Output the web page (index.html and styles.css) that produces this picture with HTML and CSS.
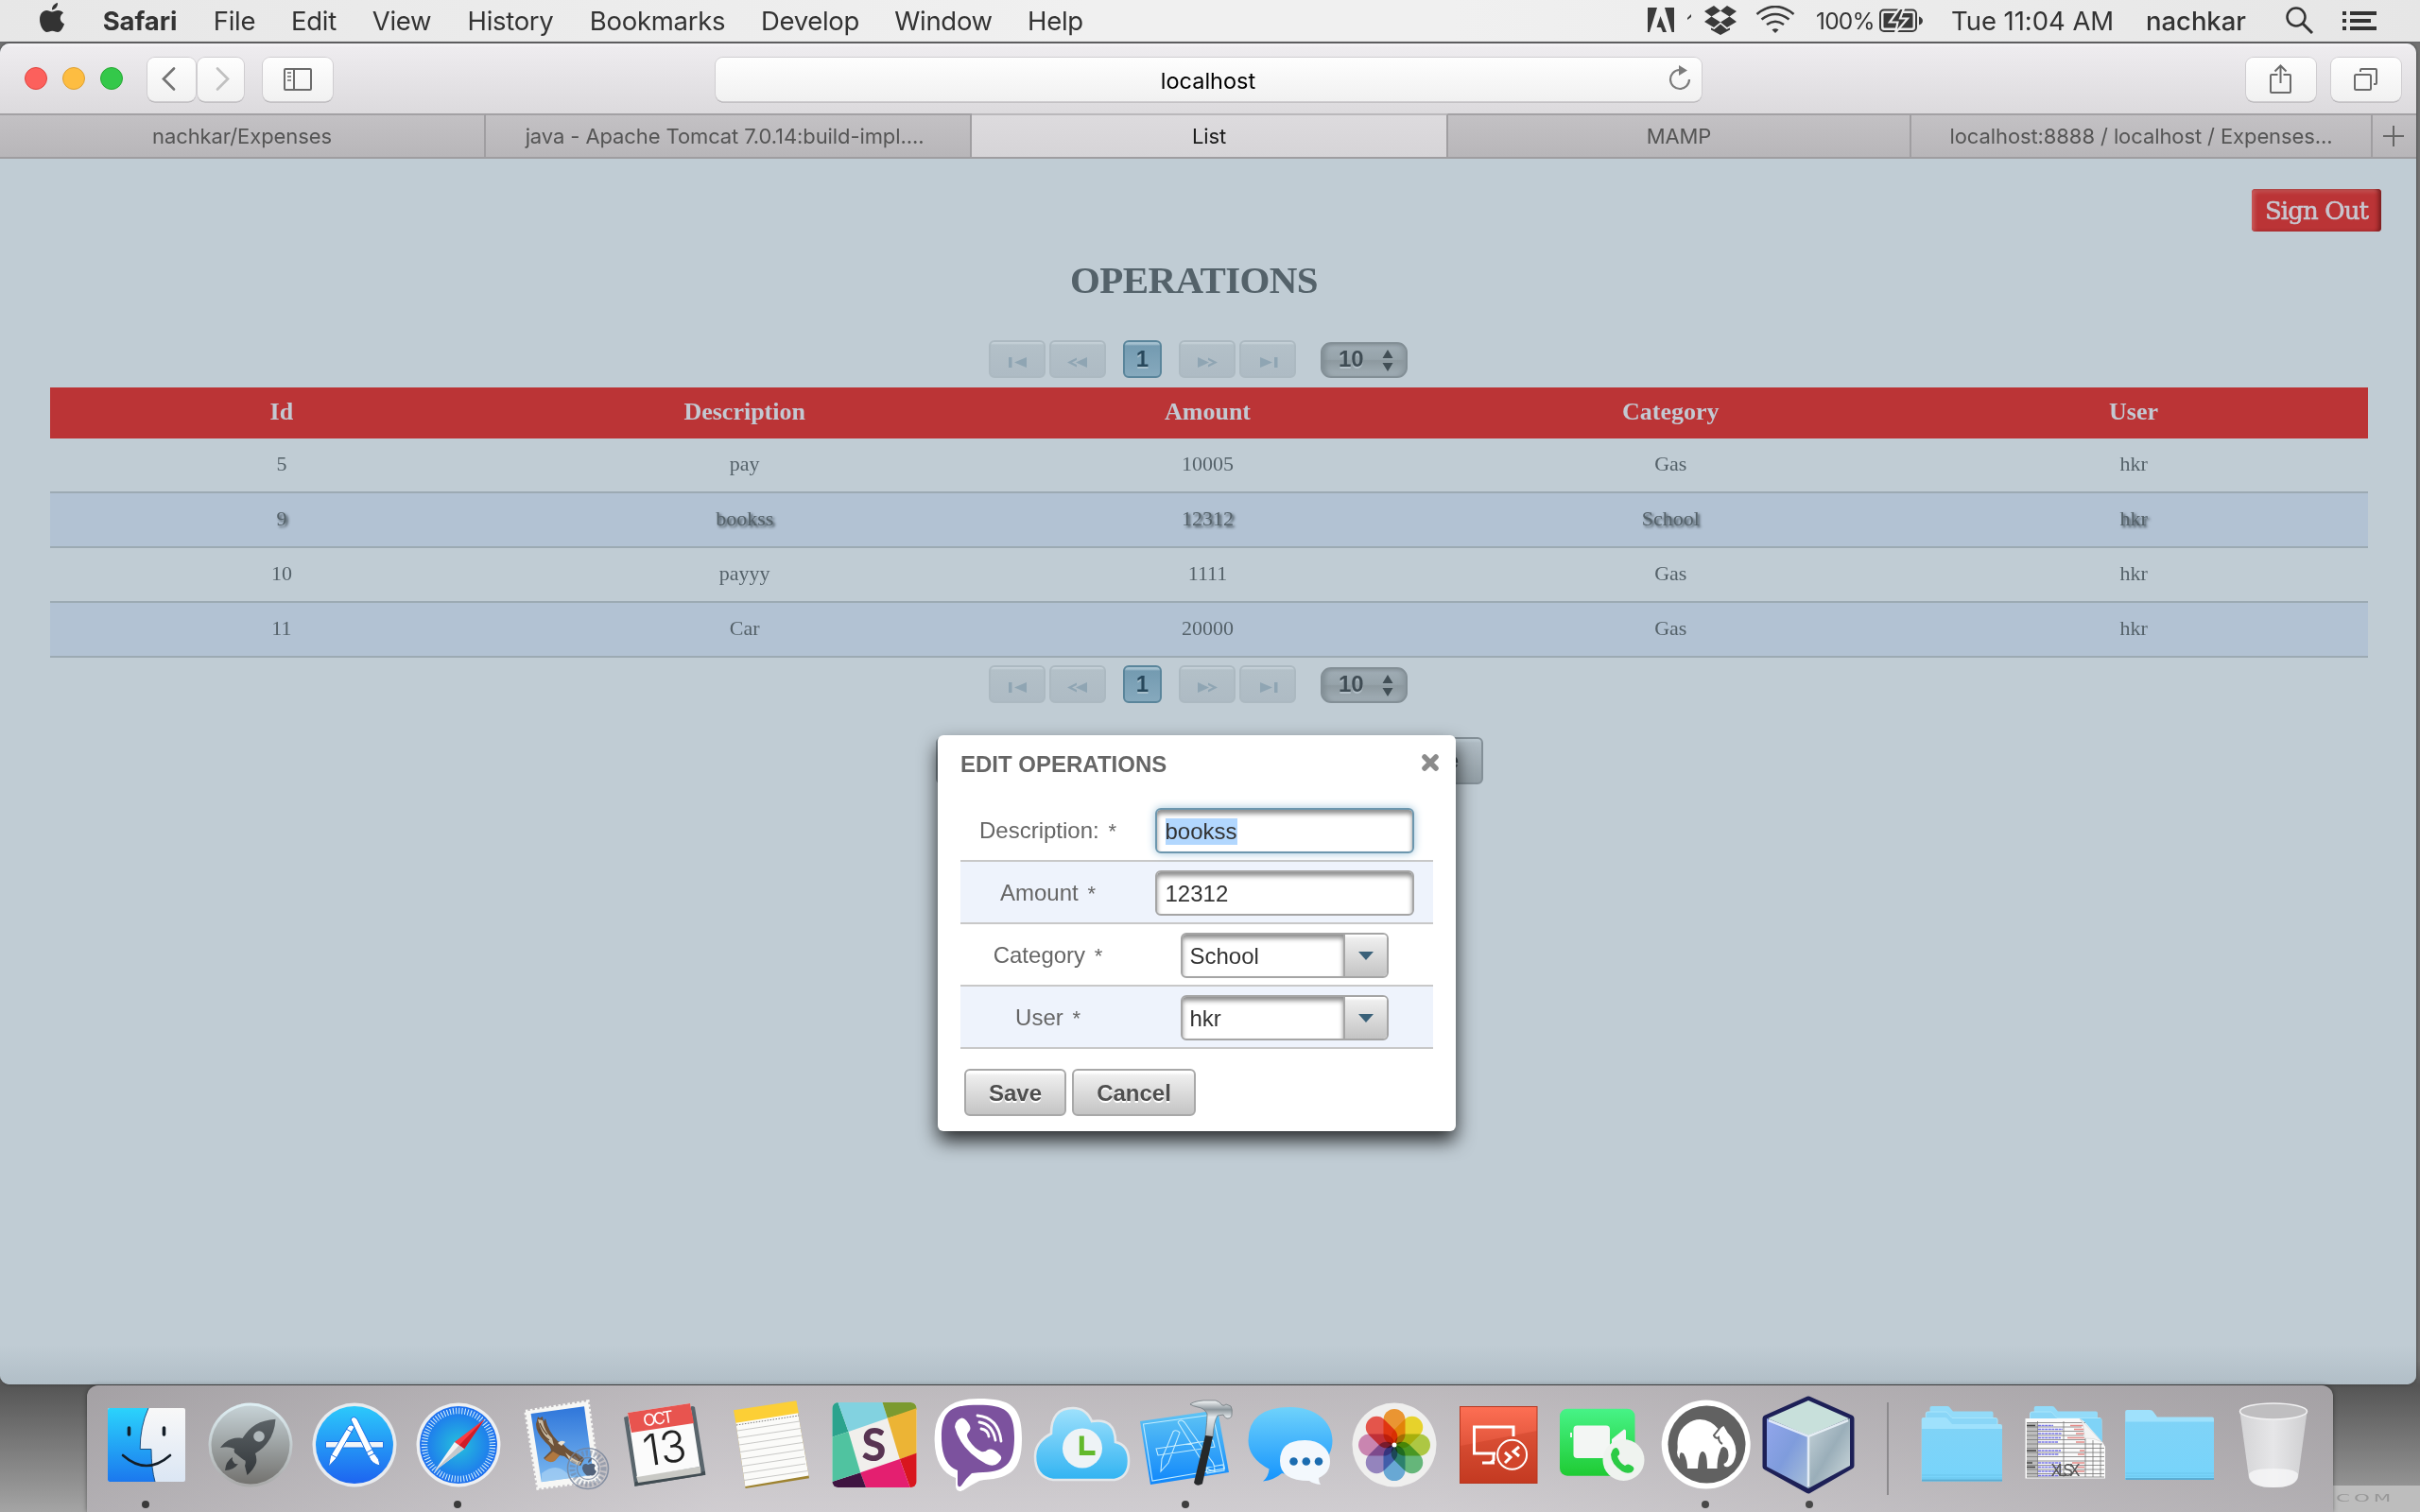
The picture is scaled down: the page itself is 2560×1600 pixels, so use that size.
FILE: index.html
```html
<!DOCTYPE html>
<html lang="en">
<head>
<meta charset="utf-8">
<title>List</title>
<link rel="stylesheet" href="styles.css">
</head>
<body>
<div class="desktop">
  <header class="menubar">
    <svg class="apple" width="26" height="32" viewBox="0 0 26 32"><path d="M13 9.500c2-0 3.800-1.600 6.500-1.600 2.300 0 4.300 1 5.500 2.800-4.800 3-4 9.700 1 11.500-1 3.500-3.800 8.800-7 8.800-2 0-3-1.300-5.700-1.300S9.500 31 7.700 31C4 31 0 24 0 17.500 0 11.500 3.600 8 7.200 8c2.400 0 4.200 1.500 5.800 1.500zM13 7.500C12.700 3.800 15.700.600 19 0c.400 3.900-2.800 7.400-6 7.500z"/></svg>
    <nav class="menus">
      <b style="width:80px">Safari</b><span style="width:44px">File</span><span style="width:48px">Edit</span><span style="width:62px">View</span><span style="width:92px">History</span><span style="width:143px">Bookmarks</span><span style="width:104px">Develop</span><span style="width:102px">Window</span><span style="width:59px">Help</span>
    </nav>
    <div class="status">
      <svg class="adobe" width="48" height="28" viewBox="0 0 48 28"><path d="M0 1h10L2 27H0zM18 1h10v26h-2.500zM13.500 10l6.500 17h-4l-2-5H9.500z"/><path d="M42 12l4-4v3l-4 3z"/></svg>
      <svg class="dropbox" width="34" height="32" viewBox="0 0 34 32"><path d="M10 0l7 5.500-9.500 6L0 6zM24 0l10 6-7.500 5.500-9.500-6zM7.500 11.500l9.500 6-7 5.500L0 17zM26.500 11.500L34 17l-10 6-7-5.500zM7 23.500l3.500 1.500 6.500-5.500 6.500 5.500 3.500-1.500v2L17 31 7 25.500z"/></svg>
      <svg class="wifi" width="42" height="30" viewBox="0 0 42 30"><g fill="none" stroke="#3a3a3a" stroke-width="2.600"><path d="M1.500 9Q21-7 40.500 9M6.500 14.500q14.500-11 29 0M12 20q9-6.500 18 0"/></g><path d="M17.500 25.500q3.500-2.500 7 0L21 29z"/></svg>
      <span class="pct">100%</span>
      <svg class="battery" width="47" height="26" viewBox="0 0 47 26"><rect x="1" y="1.500" width="38" height="22.500" rx="4" fill="none" stroke="#3a3a3a" stroke-width="2"/><rect x="4.500" y="5" width="31" height="15.500" rx="1"/><path d="M42 8.500q4 1.500 4 4.500t-4 4.500z"/><path d="M21.500 0L11 14.500h8.500L17 26l13-15.500h-8L26 0z" stroke="#eee" stroke-width="2.200"/></svg>
      <span class="clock">Tue 11:04 AM</span>
      <span class="who">nachkar</span>
      <svg class="search" width="30" height="30" viewBox="0 0 30 30"><g fill="none" stroke="#333" stroke-width="2.500"><circle cx="11" cy="11" r="9.500"/><path d="M18 18l10 10" stroke-width="3"/></g></svg>
      <svg class="list" width="36" height="20" viewBox="0 0 36 20"><path d="M0 0h4v4H0zM8 0h28v4H8zM0 8h4v4H0zM8 8h22v4H8zM0 16h4v4H0zM8 16h28v4H8z"/></svg>
    </div>
  </header>

  <main class="window">
    <div class="toolbar">
      <i class="light red"></i><i class="light amber"></i><i class="light green"></i>
      <div class="tb back"><svg width="52" height="46" viewBox="0 0 52 46"><path d="M28 11.500L17 22.500l11 11" fill="none" stroke="#737373" stroke-width="2.700" stroke-linecap="round"/></svg></div>
      <div class="tb fwd"><svg width="50" height="46" viewBox="0 0 50 46"><path d="M21 11.500l11 11-11 11" fill="none" stroke="#c0c0c0" stroke-width="2.700" stroke-linecap="round"/></svg></div>
      <div class="tb side"><svg width="76" height="46" viewBox="0 0 76 46"><g fill="none" stroke="#6b6b6b" stroke-width="2"><rect x="24" y="12" width="28" height="22" rx="1"/><path d="M34 12v22"/></g><path d="M27 15h4v2h-4zM27 19h4v2h-4zM27 23h4v2h-4z" fill="#8a8a8a"/></svg></div>
      <div class="address"><span>localhost</span><svg width="26" height="30" viewBox="0 0 26 30"><path d="M12.500 6A10 10 0 1 0 23 16" fill="none" stroke="#7b7b7b" stroke-width="2.200"/><path d="M12 1l9 5.500-9 5.500z" fill="#7b7b7b"/></svg></div>
      <div class="tb share"><svg width="76" height="46" viewBox="0 0 76 46"><g fill="none" stroke="#6b6b6b" stroke-width="2"><path d="M34.500 18H28q-1 0-1 1v17q0 1 1 1h19q1 0 1-1V19q0-1-1-1h-6.500M37.500 27V9M31.500 14.500l6-6 6 6"/></g></svg></div>
      <div class="tb tabsbtn"><svg width="76" height="46" viewBox="0 0 76 46"><g fill="none" stroke="#6b6b6b" stroke-width="2"><rect x="26" y="18" width="17" height="16" rx="1.500"/><path d="M32 15v-2q0-1 1-1h15q1 0 1 1v14q0 1-1 1h-2"/></g></svg></div>
    </div>
    <div class="tabs">
      <div class="tab">nachkar/Expenses</div>
      <div class="tab long">java - Apache Tomcat 7.0.14:build-impl....</div>
      <div class="tab on">List</div>
      <div class="tab">MAMP</div>
      <div class="tab">localhost:8888 / localhost / Expenses...</div>
      <div class="plus"><svg width="22" height="22" viewBox="0 0 22 22"><path d="M0 11h22M11 0v22" stroke="#666" stroke-width="2"/></svg></div>
    </div>
    <section class="page">
      <div class="signrow"><button class="signout">Sign Out</button></div>
      <h2>OPERATIONS</h2>
      <div class="pager">
        <span class="pg"><svg width="56" height="36" viewBox="0 0 56 36"><path d="M19 16h3.500v11H19zM38 16v11L25 21.500z"/></svg></span><span class="pg"><svg width="56" height="36" viewBox="0 0 56 36"><path d="M38 16v11L26 21.500zM27 16.500l-10 5 10 5v-2.500l-5-2.500 5-2.500z"/></svg></span><span class="num">1</span><span class="pg"><svg width="56" height="36" viewBox="0 0 56 36"><path d="M18 16v11l12-5.500zM29 16.500l10 5-10 5v-2.500l5-2.500-5-2.500z"/></svg></span><span class="pg"><svg width="56" height="36" viewBox="0 0 56 36"><path d="M35 16h3.500v11H35zM20 16v11l13-5.500z"/></svg></span>
        <span class="rpp">10<svg width="12" height="24" viewBox="0 0 12 24"><path d="M6 0l5.500 9H.5zM6 23L.5 14h11z"/></svg></span>
      </div>
      <div class="table">
        <div class="row head"><span>Id</span><span>Description</span><span>Amount</span><span>Category</span><span>User</span></div>
        <div class="row"><span>5</span><span>pay</span><span>10005</span><span>Gas</span><span>hkr</span></div>
        <div class="row alt hot"><span>9</span><span>bookss</span><span>12312</span><span>School</span><span>hkr</span></div>
        <div class="row"><span>10</span><span>payyy</span><span>1111</span><span>Gas</span><span>hkr</span></div>
        <div class="row alt"><span>11</span><span>Car</span><span>20000</span><span>Gas</span><span>hkr</span></div>
      </div>
      <div class="pager low">
        <span class="pg"><svg width="56" height="36" viewBox="0 0 56 36"><path d="M19 16h3.500v11H19zM38 16v11L25 21.500z"/></svg></span><span class="pg"><svg width="56" height="36" viewBox="0 0 56 36"><path d="M38 16v11L26 21.500zM27 16.500l-10 5 10 5v-2.500l-5-2.500 5-2.500z"/></svg></span><span class="num">1</span><span class="pg"><svg width="56" height="36" viewBox="0 0 56 36"><path d="M18 16v11l12-5.500zM29 16.500l10 5-10 5v-2.500l5-2.500-5-2.500z"/></svg></span><span class="pg"><svg width="56" height="36" viewBox="0 0 56 36"><path d="M35 16h3.500v11H35zM20 16v11l13-5.500z"/></svg></span>
        <span class="rpp">10<svg width="12" height="24" viewBox="0 0 12 24"><path d="M6 0l5.500 9H.5zM6 23L.5 14h11z"/></svg></span>
      </div>
      <div class="actions"><div class="act"></div><div class="act last">e</div></div>
    </section>
  </main>

  <div class="dialog">
    <div class="dtitle"><span>EDIT OPERATIONS</span><svg width="20" height="20" viewBox="0 0 20 20"><path d="M4 4l12 12M16 4L4 16" stroke="#8b8b8b" stroke-width="5.500" stroke-linecap="round"/></svg></div>
    <div class="form">
      <div class="frow"><label>Description: <i>*</i></label><div class="cell"><div class="input focus"><mark>bookss</mark></div></div></div>
      <div class="frow alt"><label>Amount <i>*</i></label><div class="cell"><div class="input">12312</div></div></div>
      <div class="frow"><label>Category <i>*</i></label><div class="cell"><div class="select"><span>School</span><b><svg width="16" height="9" viewBox="0 0 14 9" preserveAspectRatio="none"><path d="M0 0h14L7 9z"/></svg></b></div></div></div>
      <div class="frow alt"><label>User <i>*</i></label><div class="cell"><div class="select"><span>hkr</span><b><svg width="16" height="9" viewBox="0 0 14 9" preserveAspectRatio="none"><path d="M0 0h14L7 9z"/></svg></b></div></div></div>
    </div>
    <div class="buttons"><button style="width:108px">Save</button><button style="width:131px">Cancel</button></div>
  </div>

  <div class="wallpaper-text"><span>COM</span></div>

  <footer class="dock">
    <svg width="0" height="0" class="defs">
      <defs>
        <linearGradient id="gFinder" x1="0" y1="0" x2="0" y2="1"><stop offset="0" stop-color="#2bd3fc"/><stop offset="1" stop-color="#1b78ee"/></linearGradient>
        <linearGradient id="gFace" x1="0" y1="0" x2="0" y2="1"><stop offset="0" stop-color="#f8f8f8"/><stop offset="1" stop-color="#dbe6f4"/></linearGradient>
        <linearGradient id="gLaunch" x1="0" y1="0" x2="0" y2="1"><stop offset="0" stop-color="#c6d2d6"/><stop offset="1" stop-color="#73726f"/></linearGradient>
        <linearGradient id="gRing" x1="0" y1="0" x2="0" y2="1"><stop offset="0" stop-color="#dff0f5"/><stop offset="1" stop-color="#a9a9a9"/></linearGradient>
        <linearGradient id="gRocket" x1="0" y1="0" x2="0" y2="1"><stop offset="0" stop-color="#5c6367"/><stop offset="1" stop-color="#33373a"/></linearGradient>
        <linearGradient id="gStore" x1="0" y1="0" x2="0" y2="1"><stop offset="0" stop-color="#2cc9fb"/><stop offset="1" stop-color="#1d64f0"/></linearGradient>
        <radialGradient id="gSafari"><stop offset="0" stop-color="#25c0dc"/><stop offset="1" stop-color="#1d6ff0"/></radialGradient>
        <linearGradient id="gSky" x1="0" y1="0" x2="0" y2="1"><stop offset="0" stop-color="#2f76da"/><stop offset="1" stop-color="#7cb9f0"/></linearGradient>
        <linearGradient id="gCloud" x1="0" y1="0" x2="0" y2="1"><stop offset="0" stop-color="#9fe1fc"/><stop offset="1" stop-color="#31b3f2"/></linearGradient>
        <linearGradient id="gXcode" x1="0" y1="0" x2="0" y2="1"><stop offset="0" stop-color="#5fc4f4"/><stop offset="1" stop-color="#0f87fb"/></linearGradient>
        <linearGradient id="gMsg" x1="0" y1="0" x2="0" y2="1"><stop offset="0" stop-color="#6fd2fb"/><stop offset="1" stop-color="#1594fd"/></linearGradient>
        <linearGradient id="gRdp" x1="0" y1="0" x2="0" y2="1"><stop offset="0" stop-color="#fd6f54"/><stop offset="1" stop-color="#c53a22"/></linearGradient>
        <linearGradient id="gGreen" x1="0" y1="0" x2="0" y2="1"><stop offset="0" stop-color="#47f387"/><stop offset="1" stop-color="#1fcb33"/></linearGradient>
        <linearGradient id="gFolder" x1="0" y1="0" x2="0" y2="1"><stop offset="0" stop-color="#7fd3f7"/><stop offset="1" stop-color="#77d4fb"/></linearGradient>
        <linearGradient id="gNbL" x1="0" y1="0" x2="1" y2="1"><stop offset="0" stop-color="#92a6ec"/><stop offset=".5" stop-color="#7f9cdc"/><stop offset="1" stop-color="#a9c0d8"/></linearGradient>
        <linearGradient id="gNbR" x1="0" y1="0" x2="1" y2="1"><stop offset="0" stop-color="#c6d4da"/><stop offset=".5" stop-color="#9aaeb9"/><stop offset="1" stop-color="#d2dde0"/></linearGradient>
        <linearGradient id="gTrash" x1="0" y1="0" x2="1" y2="0"><stop offset="0" stop-color="#d4d4d6"/><stop offset=".5" stop-color="#e6e6e8"/><stop offset="1" stop-color="#cfcfd1"/></linearGradient>
        <linearGradient id="gSteel" x1="0" y1="0" x2="0" y2="1"><stop offset="0" stop-color="#f6f8f9"/><stop offset=".25" stop-color="#8b959b"/><stop offset=".45" stop-color="#e4e9ec"/><stop offset="1" stop-color="#aab4ba"/></linearGradient>
      </defs>
    </svg>
    <!-- Finder -->
    <svg class="app" viewBox="0 0 110 134"><rect x="14" y="24" width="82" height="78" rx="2" fill="url(#gFace)"/><path d="M16 24h41q-9 20-8.800 43.500H60q0 20 4 34.500H16q-2 0-2-2V26q0-2 2-2z" fill="url(#gFinder)"/><path d="M57 24q-9 20-8.800 43.500H60q0 20 4 34.500" fill="none" stroke="#1c4f80" stroke-width="1"/><path d="M36.500 45v7M73.500 45v7" stroke="#141e28" stroke-width="3.600" stroke-linecap="round"/><path d="M30 74q25 22 50 0" fill="none" stroke="#141e28" stroke-width="2.600" stroke-linecap="round"/><circle cx="54" cy="126" r="4" fill="#3a3a3a"/></svg>
    <!-- Launchpad -->
    <svg class="app" viewBox="0 0 110 134"><circle cx="55" cy="63" r="44.500" fill="url(#gRing)"/><circle cx="55" cy="63" r="41.500" fill="url(#gLaunch)"/><path d="M81.500 35.700C64 37 55 43 46.500 56 37 54 29 58 23 66q8-2 15 1-1 4 1 5l9 7q3 0 1 6l2.500 10q7-6 9.500-13 1-5-1-10 20-12 21.500-36.300z" fill="url(#gRocket)"/><circle cx="64" cy="54" r="5.800" fill="#b0b8bb"/><path d="M36 76q-7 4-8 14 9 0 14-7-4 1-5-2-2-2-1-5z" fill="#3c4043"/></svg>
    <!-- App Store -->
    <svg class="app" viewBox="0 0 110 134"><circle cx="55" cy="63" r="44.500" fill="#e8ebee"/><circle cx="55" cy="63" r="41" fill="url(#gStore)"/><g stroke="#1c73e6" stroke-width="1"><path d="M24.500 59.500h61v6.500h-61z" fill="#f2f5f8"/><path d="M48 44q3-4 7 0L36 77l-8.500 9 2-11z" fill="#fff"/><path d="M51 36q3-5 7 0l18 36-6 4z" fill="#fff"/><path d="M70 75l6-3q6 6 6 13-9-2-12-10z" fill="#fff"/><path d="M46 46l7 4M68 71l6.500-3.500M30 73l6 3.500" /></g></svg>
    <!-- Safari -->
    <svg class="app" viewBox="0 0 110 134"><circle cx="55" cy="63" r="44.500" fill="#eef0f2"/><circle cx="55" cy="63" r="41" fill="url(#gSafari)"/><circle cx="55" cy="63" r="36" fill="none" stroke="#d5eefa" stroke-width="6.500" stroke-dasharray="1.050 2.091"/><path d="M82.700 35.700L61 67.300 50.800 60z" fill="#fb3b42"/><path d="M82.700 35.700L61 67.300 55.500 63.500z" fill="#cf1d28"/><path d="M29.600 90.700L50.800 60 61 67.300z" fill="#f3f3f3"/><path d="M29.600 90.700L55.500 63.500 61 67.300z" fill="#c4c8cc"/><circle cx="54" cy="126" r="4" fill="#3a3a3a"/></svg>
    <!-- Mail -->
    <svg class="app" viewBox="0 0 110 134"><path d="M16 27.500L82 17l11.500 83.500L29 109z" fill="#f7f7f5"/><path d="M16 27.500L82 17l11.500 83.500L29 109z" fill="none" stroke="#f7f7f5" stroke-width="3.400" stroke-dasharray="2.600 2.400"/><path d="M21.600 30L78 22.300l9.800 72.400-55.100 7.600z" fill="url(#gSky)"/><path d="M33 93q15-12 27 0t27-6v8l-54 7z" fill="#a9d2f3" opacity=".7"/><path d="M29 33q2 3 3 1l2-1 1 5 2-3q3 14 13 24l5 2q4 6 10 9 9 3 13 8l-4 7-8-3-9-7-5-1-6 6q-6 2-11-3l8-8q-1-5-4-7Q27 51 27 41z" fill="#6f5238"/><path d="M29 36q4 18 17 28l-2-8Q36 49 34 37z" fill="#c9bba4"/><path d="M31 40q4 9 8 12M30 46q5 8 11 12" stroke="#5c452f" stroke-width="1.200" fill="none"/><path d="M58 71q9 8 17 10l-3 4-9-5z" fill="#d6c6ac"/><path d="M45 70l-9 8q5 5 11 2l5-6z" fill="#b07840"/><path d="M50 61q4-4 8-1l-4 4z" fill="#ece2d2"/><g fill="none" stroke="#75839a" opacity=".8"><circle cx="82" cy="88" r="21.500" stroke-width="1.600"/><circle cx="82" cy="88" r="16.500" stroke-width="6" stroke-dasharray="2.400 2" opacity=".7"/><circle cx="82" cy="88" r="11.500" stroke-width="1.300"/></g><path d="M82 84q6-3 8 1-3 3 1 6-3 6-6 4-3 1-5 0-6-6-3-11 3-2 5 0zM82 82q0-4 4-5 0 4-4 5z" fill="#52627a"/></svg>
    <!-- Calendar -->
    <svg class="app" viewBox="0 0 110 134"><path d="M10 34l5-2 68-10 2 1 11.500 71.700L21.400 106.700z" fill="#59656c"/><path d="M22 102l74-11v3.700l-74.600 12z" fill="#414c52"/><path d="M23 96l68-10 .500 7L25 103z" fill="#c9c9c5"/><path d="M14 29l66-10 10.400 67L24 97z" fill="#fbfbfb"/><path d="M14 29l66-10 4 21-66 10z" fill="#e8544f"/><g transform="rotate(-8.500 50 60)" text-anchor="middle" class="cal"><text x="50" y="41" font-size="17.500" fill="#fff" textLength="32">OCT</text><text x="52" y="83" font-size="46" font-weight="300" fill="#222" textLength="46" lengthAdjust="spacingAndGlyphs">13</text></g></svg>
    <!-- Notes -->
    <svg class="app" viewBox="0 0 110 134"><path d="M18 37l66-9 12 70.300L28.600 109z" fill="#9e8330"/><path d="M18 37l66-9 11.500 67.500L28.300 107z" fill="#fbfbf9"/><path d="M16 26.300l66.400-10 2.500 13L18.400 39.700z" fill="#fccf36"/><g stroke="#c9c9c7" stroke-width="1"><path d="M20 48l66-10M21 55.500l66-10M22 63l66-10M23 70.500l66-10M24 78l66-10M25 85.500l66-10M26 93l66-10M27 100.500l67-10"/><path d="M19 42l66-10" stroke="#777" stroke-dasharray="1.500 1.500"/></g></svg>
    <!-- Slack -->
    <svg class="app" viewBox="0 0 110 134"><clipPath id="cSlack"><rect x="10.500" y="18" width="89" height="90" rx="6"/></clipPath><g clip-path="url(#cSlack)"><path d="M10 18h90v90H10z" fill="#f1efec"/><path d="M10 18h6.500l11 31L10 54.700z" fill="#2ba38d"/><path d="M16.500 18h47l5.300 16.700L27.500 49z" fill="#82d2e0"/><path d="M63.500 18H100v7.500l-31.200 9.200z" fill="#7b9a30"/><path d="M68.800 34.700L100 24v48l-18.200 6z" fill="#ecb435"/><path d="M81.800 78L100 71.500V108h-7.300z" fill="#d8161e"/><path d="M40.200 92.300L81.800 78l10.900 30H46z" fill="#e41f70"/><path d="M10 102l30.200-9.700L46 108H10z" fill="#3f1441"/><path d="M10 54.700L27.500 49l12.700 43.300L10 102z" fill="#50c3a0"/></g><text x="54.500" y="80" font-size="47" text-anchor="middle" class="slack">S</text></svg>
    <!-- Viber -->
    <svg class="app" viewBox="0 0 110 134"><path d="M55 14c34 0 46 8 46 42 0 32-10 42-40 44l-5 1q-10 5-17 10-7 3-8-4V98Q8.600 90 8.600 56 8.600 14 55 14z" fill="#fff"/><path d="M55 20.700c28 0 38 6 38 34 0 29-9 37-38 37.600L48 93q-6 5-11 13-3 3-4-1V90Q16 84 16 55c0-28 10-34.300 39-34.300z" fill="#7c529e"/><path d="M33 37q5-5 9 0 7 8 3 12-4 3 0 9 6 9 13 12 4 1 7-2 5-2 12 5 5 4-1 9-5 5-13 1Q36 68 30 44q0-4 3-7z" fill="#fff"/><path d="M54 32q22 2 25 27M56 39q14 2 17 19M58 46q7 1 8 8" fill="none" stroke="#fff" stroke-width="2.800" stroke-linecap="round"/></svg>
    <!-- Cloud backup -->
    <svg class="app" viewBox="0 0 110 134"><path d="M24 100Q5 97 5 75q0-15 17-24 0-27 23-27 14 0 20 14 25-4 25 22 14 3 14 20 0 17-15 20z" fill="url(#gCloud)" stroke="#e3e7ea" stroke-width="2.600"/><circle cx="55" cy="66.500" r="21" fill="#eef3f6"/><path d="M54.300 56v15.500H66" fill="none" stroke="#62b92b" stroke-width="5" stroke-linecap="square"/></svg>
    <!-- Xcode -->
    <svg class="app" viewBox="0 0 110 134"><path d="M6 38l74.400-10.700 8 .700L100 92 17 105z" fill="url(#gXcode)"/><g fill="none" stroke="#c4ecfd" stroke-width="1.100"><path d="M9.500 41L83 31l12.500 57L19 101z"/><path d="M23 67l60-9 2 7-60 9zM41 49q3-3 7 1L36 82l-8 9 1-13zM46 39q3-4 7 0l28 40M46 39l26 42q2 8 13 10 0-8-4-12M76 87l18-3 1 6-18 3z"/></g><path d="M59 20q3-3 14-4h13q4 1 7 5 2 1 4-1l5 2q2 3 1 9 0 4-5 4-3-1-4-4l-6 1q-4 6-5 23l-8-1q2-17 2-24-3-6-10-7-5-1-8-3z" fill="url(#gSteel)" stroke="#6f787d" stroke-width=".8"/><path d="M75 53l8 1-11 50q-6 4-9-1z" fill="#26282a"/><circle cx="54" cy="126" r="4" fill="#3e3e3e"/></svg>
    <!-- Messages -->
    <svg class="app" viewBox="0 0 110 134"><path d="M55 23c26 0 44.500 15 44.500 35.500S81 94 55 94q-5 0-9-1-8 7-20 8.500 6-5 6.500-13Q10.500 77 10.500 58.500 10.500 23 55 23z" fill="url(#gMsg)"/><path d="M70.500 58c15 0 26.500 9 26.500 22 0 9-4 14-12 18q0 4 2 7-8-1-12-4-31 0-31-21 0-22 26.500-22z" fill="#f3f8fd"/><g fill="#1b6cb0"><circle cx="58.500" cy="80.500" r="4.300"/><circle cx="71.800" cy="80.500" r="4.300"/><circle cx="85" cy="80.500" r="4.300"/></g></svg>
    <!-- Photos -->
    <svg class="app" viewBox="0 0 110 134"><circle cx="55" cy="63" r="44.500" fill="#efefee"/><g class="petals"><rect x="43.500" y="25" width="23" height="38" rx="11.500" fill="#fa9f35"/><rect x="43.500" y="25" width="23" height="38" rx="11.500" fill="#f7e02e" transform="rotate(45 55 63)"/><rect x="43.500" y="25" width="23" height="38" rx="11.500" fill="#b9d548" transform="rotate(90 55 63)"/><rect x="43.500" y="25" width="23" height="38" rx="11.500" fill="#6cc283" transform="rotate(135 55 63)"/><rect x="43.500" y="25" width="23" height="38" rx="11.500" fill="#6fb3e3" transform="rotate(180 55 63)"/><rect x="43.500" y="25" width="23" height="38" rx="11.500" fill="#9e8dcb" transform="rotate(225 55 63)"/><rect x="43.500" y="25" width="23" height="38" rx="11.500" fill="#d78ebd" transform="rotate(270 55 63)"/><rect x="43.500" y="25" width="23" height="38" rx="11.500" fill="#f45b50" transform="rotate(315 55 63)"/></g><circle cx="55" cy="63" r="2.500" fill="#fff"/></svg>
    <!-- Remote Desktop -->
    <svg class="app" viewBox="0 0 110 134"><rect x="14.500" y="22.500" width="81.500" height="81" fill="url(#gRdp)" stroke="#b8371f"/><path d="M15 64q40-8 81-16v55H15z" fill="#c0391f" opacity=".35"/><g fill="none" stroke="#fff" stroke-width="3"><path d="M71 54V44H29.500v28H52M38 82h13"/><path d="M50 72v7l-3 3"/></g><circle cx="69.600" cy="73.300" r="17" fill="#d2452b"/><circle cx="69.600" cy="73.300" r="15.500" fill="none" stroke="#fff" stroke-width="2"/><path d="M62 71l6 5-6 6M77 65l-6 5 6 5" fill="none" stroke="#fff" stroke-width="3"/></svg>
    <!-- FaceTime -->
    <svg class="app" viewBox="0 0 110 134"><rect x="10" y="24.700" width="79.500" height="71" rx="8" fill="url(#gGreen)"/><rect x="24.500" y="42.500" width="38.500" height="34.500" rx="4" fill="#f3f6f4"/><path d="M65 57l13-10.500q2 0 2 2V68l-15-7zM21 50h2v5h-2z" fill="#f3f6f4"/><circle cx="77.500" cy="79" r="22" fill="#eff3ef"/><path d="M66 68q4-4 6 0 3 5-1 7 2 7 8 10 3-3 7 0 5 3 0 7-5 2-10-1-12-8-12-18z" fill="#2bcb45"/></svg>
    <!-- MAMP -->
    <svg class="app" viewBox="0 0 110 134"><circle cx="54.700" cy="62.500" r="47" fill="#fff"/><circle cx="55.500" cy="62.500" r="41" fill="#616161"/><path d="M24.500 62q0-14 10-21 12-9 25-2 5 3 8 7l6-3 4 7q9 9 9 21-1 12-8 15-5 1-5-3 5-2 5-9 0-8-5-9-3 0-4 5-3 7-3 18H56q0-18-5-18-4 0-5 18H35q0-9-4-16l-3-1q-2 3-1 7-3-3-3-7 1-4 .5-9z" fill="#fff"/><path d="M71 43l-8 10q2 4 5 2 0 5 4 7" fill="none" stroke="#616161" stroke-width="2"/><circle cx="54" cy="126" r="4" fill="#484848"/></svg>
    <!-- NetBeans -->
    <svg class="app" viewBox="0 0 110 134"><path d="M53 15l45 20v50L53 111 8 86V35z" fill="#1d2057" stroke="#1d2057" stroke-width="7" stroke-linejoin="round"/><path d="M9 35l44 18v56L9 86z" fill="url(#gNbL)"/><path d="M97 35L53 53v56l44-24z" fill="url(#gNbR)"/><path d="M53 16l43 19-43 18L10 35z" fill="#c8e0db"/><path d="M11 37l42 17 42-17M53 54v53" fill="none" stroke="#eef6fb" stroke-width="2.500" opacity=".85"/><circle cx="54" cy="126" r="4" fill="#484848"/></svg>
    <i class="sep"></i>
    <!-- Folder stack -->
    <svg class="app" viewBox="0 0 110 134"><path d="M21.500 24q0-2 2-2H40q2 0 3 2l3 3.500h41q1.500 0 1.500 2V45h-67z" fill="#93dbf9"/><path d="M17.300 30q0-2 2-2H39l6 6.500h46q2 0 2 2V48H17.300z" fill="#8ad6f7" stroke="#a9e4fb"/><path d="M12.700 36q0-2 2-2H37q2 0 3 1l5 6h51q2 0 2 2v58H12.700z" fill="#9fe1fc"/><path d="M13 46h85v55.500H13z" fill="url(#gFolder)"/><path d="M13 95h85M13 98h85" stroke="#62bbe2" opacity=".6"/><path d="M13 100.500h85" stroke="#5badd3" stroke-width="2"/></svg>
    <!-- Spreadsheet stack -->
    <svg class="app" viewBox="0 0 110 134"><path d="M21.700 24q0-2 2-2H41q2 0 3 2l3 3.500h40q2 0 2 2V60H21.700z" fill="#93dbf9"/><path d="M17.500 30q0-2 2-2H40l6 6.500h45q2 0 2 2V64H17.500z" fill="#8ad6f7" stroke="#a9e4fb"/><path d="M12.500 35H70l15 10 12 20v33.500H12.500z" fill="#fafafa"/><path d="M14 39h11v58H14z" fill="#bdbdbd"/><path d="M14 39.500h62M14 44h58M14 48.500h60M14 53h60M14 57.500h62M14 62h80M14 66.500h82M14 71h82M14 75.500h82M14 80h82M14 84.500h82M14 89h82M14 93.500h82M14 97h82M25.500 38v59M53 38v59M76 56v41M84 58v39M92 62v35" stroke="#777" stroke-width=".8"/><path d="M26 42.500h16M26 46.500h26M26 51h25M26 55.500h24M26 60h21M26 69h24M26 73h22M26 82h24M26 86.500h25M26 91h25M26 95.500h22" stroke="#7674e6" stroke-width="1.700" stroke-dasharray="3 .6"/><path d="M60 42.500h15M64 46.500h11M66 51h9M57 55.500h18M66 60h9M70 69h5M68 73h7M62 82h13M66 86.500h9M64 91h11" stroke="#e58a88" stroke-width="1.500"/><path d="M14 42.500h9M14 69h10M14 82h6M14 86.500h9" stroke="#444" stroke-width="1.400"/><path d="M70 35q5 6 5 21 10-1 19 4z" fill="#f4f4f4" stroke="#ccc" stroke-width=".6"/><path d="M72 35l21 0 1 25z" fill="#7fd3f7"/><text x="55" y="95.500" font-size="17" text-anchor="middle" class="xlsx" textLength="31">XLSX</text></svg>
    <!-- Folder -->
    <svg class="app" viewBox="0 0 110 134"><path d="M8.200 28q0-2 2-2H34q3 0 4 2l4 5.500h58q2 0 2 2V100H8.200z" fill="#9fe1fc"/><path d="M8.200 38.500H102v61H8.200z" fill="url(#gFolder)"/><path d="M8.500 93H102M8.500 96H102" stroke="#62bbe2" opacity=".6"/><path d="M8.500 99H102" stroke="#5badd3" stroke-width="2"/></svg>
    <!-- Trash -->
    <svg class="app" viewBox="0 0 110 134"><path d="M19.500 28l9.500 70q4 10 26 10t26-10l9.500-70z" fill="url(#gTrash)"/><path d="M29 94q3-6 26-6t26 6q0 14-26 14t-26-14z" fill="#f6f6f8" opacity=".8"/><ellipse cx="55" cy="27.500" rx="35.500" ry="8.500" fill="#bfbec0" stroke="#f1f1f2" stroke-width="1.600"/></svg>
  </footer>
</div>
</body>
</html>
```

FILE: styles.css
```css
* { box-sizing: border-box; }
body { margin: 0; }
svg { display: block; flex: none; }
button { font: inherit; padding: 0; }

.desktop {
  position: relative;
  width: 2560px;
  height: 1600px;
  overflow: hidden;
  background: linear-gradient(#727272 0, #727272 1440px, #555 1466px, #939393 1572px, #a5a5a5 1600px);
  font-family: Inter, "Liberation Sans", sans-serif;
}

/* menu bar */
.menubar {
  display: flex;
  align-items: center;
  height: 46px;
  padding-left: 42px;
  border-bottom: 2px solid #6b6b6d;
  background: linear-gradient(90deg, #e7e7e7, #f0f0f0 45%, #f0f0f0 60%, #e6e6e6);
  color: #333;
  font-size: 27.5px;
  white-space: nowrap;
  fill: #3a3a3a;
}
.apple { margin-top: -6px; fill: #333; }
.menus { display: flex; gap: 38px; margin-left: 41px; letter-spacing: -0.3px; }
.menus > * { display: flex; justify-content: center; margin-left: -1px; margin-right: 1px; }
.menus b { font-weight: 700; letter-spacing: -0.1px; }
.status { display: flex; align-items: center; margin-left: auto; padding-right: 46px; }
.adobe { margin-right: 12px; margin-top: -2px; }
.dropbox { margin-right: 20px; }
.wifi { margin-right: 22px; margin-top: -2px; }
.pct { width: 60px; font-size: 24.5px; letter-spacing: -0.8px; margin-right: 7px; }
.battery { margin-right: 29px; }
.clock { width: 174px; letter-spacing: -0.05px; margin-right: 32px; }
.who { width: 107px; font-weight: 500; letter-spacing: -0.05px; margin-right: 41px; }
.search { margin-right: 30px; }
.list { fill: #333; }

/* browser window */
.window {
  display: flex;
  flex-direction: column;
  width: 2556px;
  height: 1419px;
  border-radius: 10px;
  overflow: hidden;
  background: #c0ccd4;
  box-shadow: 0 0 3px #333;
}
.toolbar {
  display: flex;
  align-items: flex-start;
  height: 74px;
  padding: 15px 0 0 26px;
  background: linear-gradient(#f6f5f7, #eeecef 4px, #dcdadd);
}
.light { width: 24px; height: 24px; margin: 10px 16px 0 0; border-radius: 50%; border: 1px solid; }
.red { background: #fc605c; border-color: #e0443f; }
.amber { background: #fdbd41; border-color: #dea034; }
.green { background: #34c84a; border-color: #27a833; margin-right: 26px; }
.tb, .address {
  height: 46px;
  border-radius: 8px;
  background: linear-gradient(#fefefe, #f1f1f1);
  box-shadow: 0 0 0 1px #cfcdd0, 0 1.5px 0 #a9a7aa;
}
.back { width: 51px; margin-right: 2px; }
.fwd { width: 49px; margin-right: 20px; }
.side { width: 74px; }
.side svg, .share svg, .tabsbtn svg { margin-left: -1px; }
.address {
  display: flex;
  justify-content: center;
  align-items: center;
  width: 1043px;
  margin: 0 576px 0 405px;
  padding-left: 26px;
  color: #000;
  font-size: 23.5px;
}
.address span { flex: 1; text-align: center; padding: 2px 0 0 9px; }
.address svg { margin: -3px 10px 0 0; }
.share { width: 74px; margin-right: 16px; }
.tabsbtn { width: 74px; }

.tabs {
  display: grid;
  grid-template-columns: 514px 514px 504px 490px 488px 46px;
  height: 48px;
  border-bottom: 2px solid #9f9da0;
  color: #555;
  font-size: 22px;
  letter-spacing: -0.1px;
}
.tab, .plus {
  display: flex;
  align-items: center;
  justify-content: center;
  border-top: 2px solid #a3a1a4;
  border-right: 2px solid #a09ea1;
  background: linear-gradient(#c3c1c4, #b8b6b9);
  white-space: nowrap;
}
.long { padding-right: 7px; }
.plus { border-right: 0; padding-right: 2px; }
.on { background: linear-gradient(#dddbde, #d6d4d7); border-top-color: #bab8bb; color: #1c1c1c; }

/* page content */
.page { flex: 1; color: #55626a; background: linear-gradient(#c0ccd4 0, #c0ccd4 1255px, #b1bec7 1297px); font-family: "Liberation Serif", serif; }
.signrow { display: flex; justify-content: flex-end; padding: 32px 37px 0 0; }
.signout {
  width: 137px;
  height: 45px;
  border: 0;
  border-radius: 4px;
  background: #bb3436;
  box-shadow: inset -4px 0 4px -1px #7a1d1e, inset 3px 3px 4px #c85a5a;
  color: #c8c6cf;
  font: 26px/44px "DejaVu Serif", serif;
  letter-spacing: -0.9px;
  white-space: nowrap;
  -webkit-text-stroke: .6px #c8c6cf;
}
h2 { margin: 28px 0 0; padding-right: 30px; height: 46px; font-size: 41px; line-height: 46px; text-align: center; letter-spacing: -0.6px; color: #54626a; }
.pager { display: flex; align-items: flex-start; height: 50px; margin-top: 41px; padding-left: 1046px; font-family: "Liberation Sans", sans-serif; font-weight: bold; }
.pg { width: 60px; height: 40px; margin-right: 4px; border: 2px solid #acb9c1; border-radius: 6px; background: linear-gradient(#c6d1d8 0 1px, #b3c0c8 3px, #aebbc4); fill: #8fa5b3; }
.num { width: 41px; height: 40px; margin: 0 18px 0 14px; border: 2px solid #5a859b; border-radius: 6px; background: linear-gradient(#a4c0cf 0 2px, #749bb1 4px, #86a9bd); color: #27485c; font-size: 24px; line-height: 36px; text-align: center; text-shadow: 0 2px 0 #a8c0cd; }
.rpp { display: flex; justify-content: space-between; width: 92px; height: 38px; margin: 2px 0 0 22px; padding: 5px 13px 0 17px; border: 2px solid #838f96; border-radius: 11px; background: linear-gradient(#8f9ba2, #9eabb3 10%, #96a3aa 48%, #8d999f 52%, #a2afb7); box-shadow: inset 5px 0 5px -2px #828e95, inset -5px 0 5px -2px #8b979e; color: #3f4c54; font-size: 24px; line-height: 22px; text-shadow: 0 2px 0 #b4c0c8; fill: #414e55; }
.rpp svg { margin-top: 1px; }
.low { margin-top: 8px; }

.table { width: 2452px; margin-left: 53px; font-size: 22px; }
.row { display: grid; grid-template-columns: repeat(5, 1fr); height: 58px; padding-right: 3px; border-bottom: 2px solid #9caab3; line-height: 53px; text-align: center; }
.head { height: 54px; border: 0; background: #bb3436; color: #c3c9d2; font-size: 26px; font-weight: bold; line-height: 51px; }
.alt { background: #b2c2d3; }
.hot { text-shadow: 2px 2px 3px #37434a; }

.actions { display: flex; gap: 400px; margin: 26px 0 0 990px; }
.act { width: 80px; height: 50px; border: 2px solid #838f97; border-radius: 6px; background: linear-gradient(#b8c5cd 0 2px, #afbbc3 4px, #919da4); }
.last { width: 99px; padding-right: 24px; color: #3e4a52; font: bold 24px/46px "Liberation Sans", sans-serif; text-align: right; }

/* edit dialog, above the page */
.dialog {
  position: absolute;
  left: 992px;
  top: 778px;
  width: 548px;
  height: 419px;
  padding: 0 24px;
  border-radius: 6px;
  background: #fff;
  box-shadow: 0 10px 20px rgba(0, 0, 0, .8);
  color: #666;
  font: 24px "Liberation Sans", sans-serif;
}
.dtitle { display: flex; justify-content: space-between; height: 68px; padding-top: 17px; font-weight: bold; }
.dtitle svg { margin: 2px -7px 0 0; }
.frow { display: grid; grid-template-columns: 185px 315px; height: 66px; border-bottom: 2px solid #c8c8c8; }
.frow.alt { background: #eef3fc; }
label { line-height: 65px; text-align: center; }
label i { margin-left: 3px; font-size: 22px; font-style: normal; }
.cell { display: flex; justify-content: center; padding-top: 9px; color: #333; line-height: 45px; }
.input { width: 274px; height: 48px; padding-left: 9px; border: 2px solid #a5a5a5; border-radius: 6px; background: #fff; box-shadow: inset 0 4px 5px #8d8d8d; }
.focus { border-color: #6d97ae; box-shadow: inset 0 4px 5px #8d8d8d, 0 0 10px #9cc3d9; }
mark { display: inline-block; height: 28px; line-height: 27px; vertical-align: middle; margin-top: -4px; background: #b2d7fe; color: #333; }
.select { display: flex; width: 220px; height: 48px; border: 2px solid #a5a5a5; border-radius: 6px; overflow: hidden; background: #fff; }
.select span { flex: 1; padding-left: 8px; box-shadow: inset 0 4px 5px #8d8d8d; }
.select b { display: flex; align-items: center; justify-content: center; width: 46px; border-left: 2px solid #a5a5a5; background: linear-gradient(#fff 0 1px, #eee 4px, #c4c4c4); fill: #3a6179; }
.buttons { display: flex; gap: 6px; padding: 21px 0 0 4px; }
.buttons button { height: 50px; padding-top: 2px; border: 2px solid #a8a8a8; border-radius: 6px; background: linear-gradient(#fff 0 2px, #eee 5px, #c4c4c4); color: #4f4f4f; font-weight: bold; text-shadow: 0 2px 0 #fff; }

/* dock, above the window and wallpaper */
.wallpaper-text { position: absolute; left: 2440px; top: 1572px; width: 120px; height: 28px; padding-left: 31px; background: #bdbdbd; color: #989898; font: 11px/28px "DejaVu Sans", sans-serif; }
.wallpaper-text span { display: block; width: 50px; letter-spacing: 2px; transform: scaleX(1.95); transform-origin: 0 50%; }
.dock {
  position: absolute;
  left: 92px;
  top: 1466px;
  display: flex;
  width: 2376px;
  height: 134px;
  padding-left: 8px;
  border-radius: 12px 12px 0 0;
  background: linear-gradient(90deg, rgba(150, 146, 150, .5), rgba(210, 205, 210, .35) 28%, rgba(210, 205, 210, .3) 60%, rgba(150, 146, 150, .5)), linear-gradient(#b2afb2, #cfcdd0);
  box-shadow: 0 0 5px rgba(0, 0, 0, .4);
}
.defs { position: absolute; }
.app { width: 110px; height: 134px; }
.sep { width: 2px; height: 98px; margin: 18px 22px 0 26px; background: #8c8a8d; }
.cal, .xlsx { font-family: Inter, sans-serif; }
.slack { font-family: Lato, sans-serif; font-weight: 900; fill: #583452; }
.xlsx { fill: #555; font-weight: 400; }
.petals rect { mix-blend-mode: multiply; }
```
